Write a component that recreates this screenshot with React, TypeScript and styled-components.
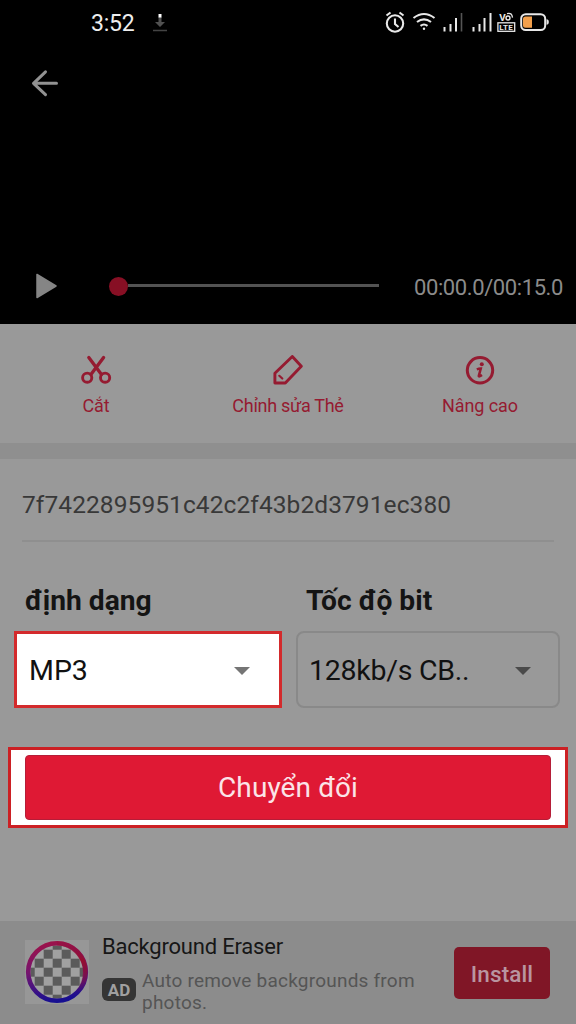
import React from "react";
import styled, { createGlobalStyle } from "styled-components";

const red = "#951b31";

const GlobalStyle = createGlobalStyle`
  * { box-sizing: border-box; }
  body { margin: 0; background: #999; font-family: Roboto, "Noto Sans", sans-serif; }
  svg { display: block; flex: none; }
`;

const Screen = styled.main`
  width: 576px;
  height: 1024px;
  display: flex;
  flex-direction: column;
  background: #999;
  overflow: hidden;
`;

const Player = styled.section`
  height: 324px;
  display: flex;
  flex-direction: column;
  background: #000;
`;

const StatusBar = styled.header`
  height: 46px;
  display: flex;
  align-items: center;
  padding: 0 27px 0 91px;
`;

const Clock = styled.span`
  width: 61px;
  padding-top: 2px;
  font-size: 23px;
  line-height: 44px;
  letter-spacing: -0.2px;
  color: #eee;
`;

const StatusIcons = styled.div`
  margin-left: auto;
  display: flex;
  align-items: center;
`;

const BackBar = styled.div`
  padding: 23px 0 0 30px;
`;

const Controls = styled.div`
  height: 40px;
  margin-top: auto;
  margin-bottom: 18px;
  display: flex;
  align-items: center;
`;

const PlayButton = styled.button`
  width: 109px;
  padding: 0 0 0 35px;
  border: 0;
  background: none;
`;

const Seek = styled.div`
  width: 270px;
  display: flex;
  align-items: center;
`;

const Knob = styled.span`
  width: 19px;
  height: 19px;
  border-radius: 50%;
  background: #870f24;
`;

const Track = styled.span`
  flex: 1;
  height: 3px;
  margin-bottom: 1px;
  background: #535353;
`;

const Time = styled.span`
  margin-left: 35px;
  padding-top: 3px;
  font-size: 22px;
  line-height: 26px;
  letter-spacing: -0.4px;
  white-space: nowrap;
  color: #8b8b8b;
`;

const Actions = styled.nav`
  height: 119px;
  display: grid;
  grid-template-columns: repeat(3, 1fr);
`;

const Action = styled.button`
  display: flex;
  flex-direction: column;
  align-items: center;
  gap: 7px;
  padding: 31px 0 0;
  border: 0;
  background: none;
  font: 18px/25px Roboto, sans-serif;
  color: ${red};
  white-space: nowrap;
`;

const ActionText = styled.span<{ $spacing: number }>`
  letter-spacing: ${(p) => p.$spacing}px;
`;

const Divider = styled.div`
  height: 16px;
  background: #8f8f8f;
`;

const Form = styled.section`
  height: 288px;
`;

const FileName = styled.div`
  height: 83px;
  margin: 0 22px;
  padding: 30px 0 0 0;
  border-bottom: 2px solid #8f8f8f;
  font-size: 24.5px;
  line-height: 32px;
  letter-spacing: 0.08px;
  white-space: nowrap;
  color: #383838;
`;

const Fields = styled.div`
  display: grid;
  grid-template-columns: 268px 264px;
  column-gap: 14px;
  padding: 41px 0 0 14px;
`;

const Field = styled.div`
  display: flex;
  flex-direction: column;
  gap: 12px;
`;

const FieldLabel = styled.span<{ $indent: number }>`
  padding-left: ${(p) => p.$indent}px;
  font-size: 28.2px;
  line-height: 36px;
  font-weight: 700;
  white-space: nowrap;
  color: #141414;
`;

const Select = styled.button<{ $active?: boolean }>`
  height: 77px;
  display: flex;
  align-items: center;
  justify-content: space-between;
  padding: ${(p) => (p.$active ? "2px 29px 0 12px" : "2px 27px 0 11px")};
  border: ${(p) => (p.$active ? "3px solid #d32a2c" : "2px solid #898989")};
  border-radius: ${(p) => (p.$active ? 0 : 8)}px;
  background: ${(p) => (p.$active ? "#fff" : "transparent")};
  font: 28.5px/36px Roboto, sans-serif;
  letter-spacing: ${(p) => (p.$active ? 0 : -0.25)}px;
  color: #111;
  white-space: nowrap;
`;

const Highlight = styled.div`
  width: 560px;
  height: 81px;
  margin-left: 8px;
  padding: 5px 14px;
  border: 3px solid #cc2024;
  background: #fff;
`;

const Convert = styled.button`
  width: 526px;
  height: 65px;
  display: block;
  padding: 1px 0 0;
  border: 1px solid #b51e38;
  border-radius: 4px;
  background: #df1934;
  font: 28px/40px Roboto, sans-serif;
  letter-spacing: 0.1px;
  color: #fbe4e8;
`;

const Advert = styled.footer`
  height: 103px;
  margin-top: auto;
  display: flex;
  background: #8c8c8c;
  padding: 0 25px;
`;

const AdBody = styled.div`
  width: 352px;
  padding: 12px 0 0 13px;
`;

const AdTitle = styled.div`
  font-size: 22px;
  line-height: 28px;
  letter-spacing: -0.2px;
  color: #171717;
`;

const AdDetails = styled.div`
  display: flex;
  gap: 6px;
  padding-top: 8px;
`;

const AdBadge = styled.span`
  width: 34px;
  height: 23px;
  margin-top: 9px;
  border-radius: 6px;
  background: #353535;
  font-size: 17px;
  font-weight: 700;
  line-height: 24px;
  text-align: center;
  color: #a0a0a0;
`;

const AdText = styled.span`
  padding-top: 1px;
  font-size: 19px;
  line-height: 22px;
  letter-spacing: 0.22px;
  white-space: nowrap;
  color: #555;
`;

const Install = styled.button`
  width: 96px;
  height: 52px;
  margin: 26px 0 0 13px;
  padding: 2px 0 0;
  border: 0;
  border-radius: 5px;
  background: #801626;
  font: 500 22.5px/28px Roboto, sans-serif;
  letter-spacing: 0.1px;
  color: #b995a0;
`;

const DownloadIcon = () => (
  <svg width="16" height="20" viewBox="0 0 16 20">
    <path d="M6.500 4h3v5h3.500L8 14 3 9h3.500z" fill="#505050" />
    <path d="M6.500 1h3v3.500h-3z" fill="#fff" />
    <path d="M1 17.500h14" stroke="#444" strokeWidth="1.500" />
  </svg>
);

const StatusGlyphs = () => (
  <svg width="166" height="26" viewBox="383 10 166 26" fill="none" stroke="#e8e8e8">
    <circle cx="395" cy="23.500" r="8.200" strokeWidth="2.100" />
    <path d="M395 18.500v5.500l3.500 3M386.500 15.500l4-3M403.500 15.500l-4-3" strokeWidth="2.100" />
    <path d="M413.500 18q10.500-8 21 0M417 22q7-5.200 14 0M420.500 25.800q3.500-2.600 7 0" strokeWidth="2.100" />
    <circle cx="424" cy="28.700" r="1.200" fill="#e8e8e8" stroke="none" />
    <path d="M444.500 31.500v-4.500M450.500 31.500v-7.500M456 31.500V18M473.500 31.500v-4.500M479.500 31.500v-7.500M484.500 31.500V18M490.500 31.500V13" strokeWidth="2" />
    <path d="M461.500 31.500V13" strokeWidth="1.600" stroke="#555" />
    <text x="499.200" y="20.500" fontSize="9.800" fontWeight="700" fontFamily="Roboto" fill="#e8e8e8" stroke="none">V</text>
    <circle cx="508" cy="18" r="2" strokeWidth="1.400" />
    <path d="M507 13.600q5-1.500 5.500 4" strokeWidth="1.300" />
    <rect x="497.900" y="22.800" width="16.800" height="8.500" strokeWidth="1.300" />
    <text x="499.200" y="30" fontSize="8" fontWeight="700" fontFamily="Roboto" letterSpacing="0.300" fill="#e8e8e8" stroke="none">LTE</text>
    <rect x="521.200" y="14.200" width="24" height="15.800" rx="4.500" strokeWidth="2" />
    <path d="M525.500 16.400h6.500v11.300h-6.500q-2.500 0-2.500-2.500v-6.300q0-2.500 2.500-2.500z" fill="#f3a04c" stroke="none" />
    <path d="M546.500 19.200q2.300 0 2.300 2.800t-2.300 2.800z" fill="#e8e8e8" stroke="none" />
  </svg>
);

const BackIcon = () => (
  <svg width="30" height="28" viewBox="30 69 30 28" fill="none" stroke="#929292" strokeWidth="3" strokeLinecap="round" strokeLinejoin="round">
    <path d="M56.500 83.300H33.500M45.500 71.800L33.500 83.300l12 11.400" />
  </svg>
);

const PlayIcon = () => (
  <svg width="22" height="26" viewBox="35 273 22 26">
    <path d="M37 274.500v23l19-11.500z" fill="#858585" stroke="#858585" strokeWidth="1.500" strokeLinejoin="round" />
  </svg>
);

const ScissorsIcon = () => (
  <svg width="32" height="31" viewBox="80 355 32 31" fill="none" stroke={red} strokeWidth="2.900" strokeLinecap="round">
    <circle cx="87.200" cy="377.700" r="4.600" />
    <circle cx="105.100" cy="377.700" r="4.600" />
    <path d="M88.800 357.500L101.500 374.500M103.600 357.500L90.900 374.500" strokeWidth="3.300" />
  </svg>
);

const PencilIcon = () => (
  <svg width="32" height="31" viewBox="272 355 32 31" fill="none" stroke={red} strokeWidth="2.900" strokeLinejoin="round" strokeLinecap="round">
    <path d="M292.300 356.500l9 9.700-16 16.800H274.900V373.300z" />
    <path d="M279.300 375.800l3 2.700" strokeWidth="2.200" />
  </svg>
);

const InfoIcon = () => (
  <svg width="32" height="31" viewBox="463.500 355 32 31" fill="none" stroke={red}>
    <circle cx="479.500" cy="370.300" r="12.700" strokeWidth="3" />
    <circle cx="481.300" cy="364.300" r="2" fill={red} stroke="none" />
    <path d="M476.300 369.300q2-.8 4-.8l-2 7.300q-.2 1.500 3.200-.8" strokeWidth="2.500" />
  </svg>
);

const Caret = ({ color }: { color: string }) => (
  <svg width="16" height="8" viewBox="0 0 16 8">
    <path d="M0 0h16L8 8z" fill={color} />
  </svg>
);

const tiles = Array.from({ length: 49 }, (_, i) => ({ row: Math.floor(i / 7), col: i % 7 })).filter(
  ({ row, col }) => (row + col) % 2 === 1
);

const EraserLogo = () => (
  <svg width="64" height="64" viewBox="0 0 64 64">
    <defs>
      <linearGradient id="ring" x1="0.350" y1="0" x2="0.500" y2="1">
        <stop offset="0" stopColor="#9b124b" />
        <stop offset="0.450" stopColor="#76146e" />
        <stop offset="1" stopColor="#170f91" />
      </linearGradient>
      <linearGradient id="glow" x1="0" y1="0" x2="0" y2="1">
        <stop offset="0" stopColor="#950f31" stopOpacity="0.300" />
        <stop offset="0.350" stopColor="#950f31" />
        <stop offset="0.550" stopColor="#850f41" />
        <stop offset="1" stopColor="#850f41" stopOpacity="0" />
      </linearGradient>
      <clipPath id="disc"><circle cx="32" cy="32" r="26.500" /></clipPath>
    </defs>
    <path d="M0 0h64v64H0z" fill="#979797" />
    <g clipPath="url(#disc)">
      <path d="M0 0h64v64H0z" fill="#a0a0a0" />
      {tiles.map(({ row, col }) => (
        <rect key={`${row}-${col}`} x={0.7 + col * 9} y={0.7 + row * 9} width="9" height="9" fill="#5b5b5b" />
      ))}
    </g>
    <circle cx="32" cy="32" r="28.800" fill="none" stroke="url(#ring)" strokeWidth="4.600" />
    <path d="M32 3.200a28.800 28.800 0 0 1 20 49" fill="none" stroke="url(#glow)" strokeWidth="4.600" />
  </svg>
);

const LogoBox = styled.div`
  padding-top: 19px;
`;

const actions = [
  { label: "Cắt", icon: <ScissorsIcon />, spacing: -0.2 },
  { label: "Chỉnh sửa Thẻ", icon: <PencilIcon />, spacing: -0.28 },
  { label: "Nâng cao", icon: <InfoIcon />, spacing: -0.1 },
];

export default function App() {
  return (
    <>
      <GlobalStyle />
      <Screen>
        <Player>
          <StatusBar>
            <Clock>3:52</Clock>
            <DownloadIcon />
            <StatusIcons><StatusGlyphs /></StatusIcons>
          </StatusBar>
          <BackBar><BackIcon /></BackBar>
          <Controls>
            <PlayButton><PlayIcon /></PlayButton>
            <Seek><Knob /><Track /></Seek>
            <Time>00:00.0/00:15.0</Time>
          </Controls>
        </Player>
        <Actions>
          {actions.map((a) => (
            <Action key={a.label}>
              {a.icon}
              <ActionText $spacing={a.spacing}>{a.label}</ActionText>
            </Action>
          ))}
        </Actions>
        <Divider />
        <Form>
          <FileName>7f7422895951c42c2f43b2d3791ec380</FileName>
          <Fields>
            <Field>
              <FieldLabel $indent={11}>định dạng</FieldLabel>
              <Select $active>MP3<Caret color="#757575" /></Select>
            </Field>
            <Field>
              <FieldLabel $indent={10}>Tốc độ bit</FieldLabel>
              <Select>128kb/s CB..<Caret color="#4a4a4a" /></Select>
            </Field>
          </Fields>
        </Form>
        <Highlight><Convert>Chuyển đổi</Convert></Highlight>
        <Advert>
          <LogoBox><EraserLogo /></LogoBox>
          <AdBody>
            <AdTitle>Background Eraser</AdTitle>
            <AdDetails>
              <AdBadge>AD</AdBadge>
              <AdText>Auto remove backgrounds from<br />photos.</AdText>
            </AdDetails>
          </AdBody>
          <Install>Install</Install>
        </Advert>
      </Screen>
    </>
  );
}
